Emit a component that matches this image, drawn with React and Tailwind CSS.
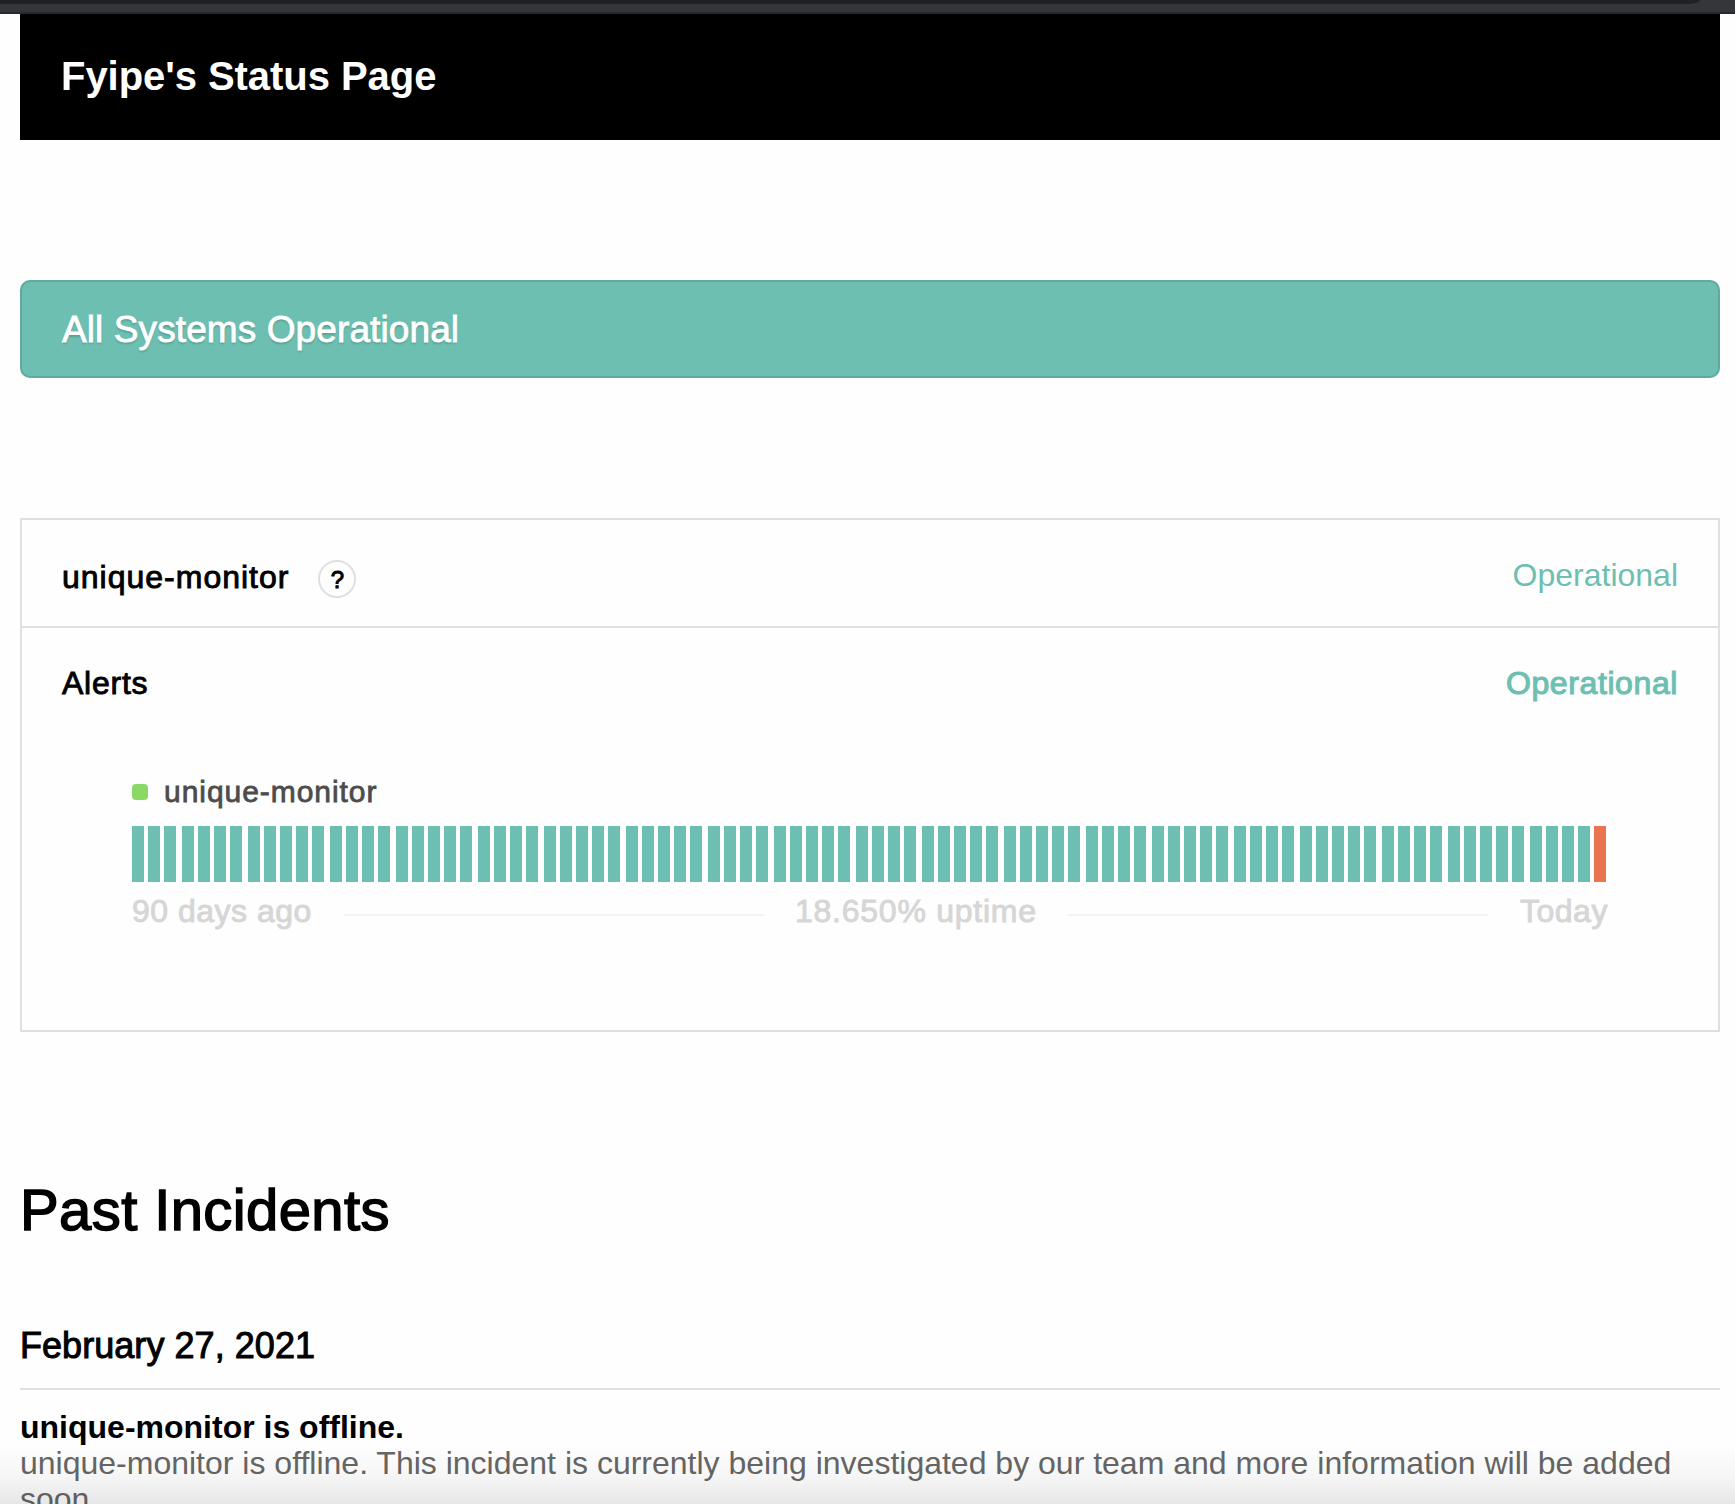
const DAYS = 90;
const PITCH = 16.4366;

// Left edge of each day's bar, snapped to whole two-pixel steps.
const edge = (i) => Math.round((i * PITCH + 0.1) / 2) * 2;
const bars = Array.from({ length: DAYS }, (_, i) => ({
  id: i,
  gap: i === 0 ? 0 : edge(i) - edge(i - 1) - 12,
  down: i === DAYS - 1,
}));

function BrowserEdge() {
  return (
    <div className="h-[14px] border-b-2 border-[#28292c] bg-[#35363a]">
      <div className="h-1 w-[1700px] rounded-br-[14px_4px] bg-[#202124]" />
    </div>
  );
}

function MonitorCard() {
  return (
    <section className="mt-[140px] h-[514px] border-2 border-[#e0e0e0]">
      <div className="flex h-[108px] items-start justify-between border-b-2 border-[#e0e0e0] px-10">
        <div className="flex items-start">
          <span className="mt-[39px] text-[32px] leading-9 tracking-[1px] [-webkit-text-stroke:0.9px]">unique-monitor</span>
          <span className="mt-10 ml-[29px] flex h-[38px] w-[38px] items-center justify-center rounded-full border-2 border-[#e0e0e0] pt-px text-2xl leading-none [-webkit-text-stroke:1px]">
            ?
          </span>
        </div>
        <span className="mt-[37px] text-[32px] leading-9 text-[#6dbfb1]">Operational</span>
      </div>
      <div className="flex justify-between px-10 pt-[37px] text-[32px] leading-9">
        <span className="tracking-[0.75px] [-webkit-text-stroke:0.9px]">Alerts</span>
        <span className="tracking-[0.6px] text-[#6dbfb1] [-webkit-text-stroke:1.1px]">Operational</span>
      </div>
      <div className="pr-[111px] pl-[110px]">
        <div className="mt-[73px] flex h-9 items-center">
          <span className="h-4 w-4 rounded bg-[#8ad967]" />
          <span className="ml-4 text-[30px] leading-9 tracking-[0.95px] text-[#4c4c4c] [-webkit-text-stroke:0.8px]">unique-monitor</span>
        </div>
        <div className="mt-4 flex h-14">
          {bars.map((bar) => (
            <span
              key={bar.id}
              className={bar.down ? "w-3 shrink-0 bg-[#e97550]" : "w-3 shrink-0 bg-[#6dbfb1]"}
              style={{ marginLeft: bar.gap }}
            />
          ))}
        </div>
        <div className="mt-[11px] flex items-center text-[32px] leading-9 tracking-[0.5px] whitespace-nowrap text-[#d6d6d6] [-webkit-text-stroke:0.9px]">
          <span className="w-[180px]">90 days ago</span>
          <span className="mt-2 mr-[30px] ml-8 h-0.5 flex-1 bg-[#f2f2f2]" />
          <span className="w-[242px] pl-px tracking-[0.75px]">18.650% uptime</span>
          <span className="mt-2 mr-8 ml-8 h-0.5 flex-1 bg-[#f2f2f2]" />
          <span className="w-[87px]">Today</span>
        </div>
      </div>
    </section>
  );
}

export default function App() {
  return (
    <div className="relative h-[1504px] overflow-hidden bg-[#fefefe] font-['Liberation_Sans',Arial,sans-serif] text-black">
      <BrowserEdge />
      <main className="mr-[15px] ml-5">
        <header className="h-[126px] bg-black pt-[42px] pl-[41px]">
          <h1 className="text-[40px] leading-10 font-bold tracking-[-0.05px] whitespace-nowrap text-white">Fyipe's Status Page</h1>
        </header>
        <div className="mt-[140px] h-[98px] rounded-[10px] border-2 border-[#5eaa9c] bg-[#6dbfb1] px-10 pt-[30px]">
          <span className="block text-[37px] leading-9 tracking-[0.1px] text-white [-webkit-text-stroke:0.8px] [text-shadow:0_2px_2px_rgba(0,0,0,0.18)]">
            All Systems Operational
          </span>
        </div>
        <MonitorCard />
        <h2 className="mt-[150px] text-[58px] leading-[56px] tracking-[0.4px] [-webkit-text-stroke:1.5px]">Past Incidents</h2>
        <h3 className="mt-[90px] text-[36px] leading-9 tracking-[0.05px] [-webkit-text-stroke:1px]">February 27, 2021</h3>
        <div className="mt-[24px] border-t-2 border-[#e0e0e0] pt-[19px] text-[32px] leading-9">
          <p className="font-bold">unique-monitor is offline.</p>
          <p className="text-[#666]">
            unique-monitor is offline. This incident is currently being investigated by our team and more information will be added
            soon.
          </p>
        </div>
      </main>
      <div className="pointer-events-none absolute inset-x-0 bottom-0 h-[60px] bg-linear-to-b from-black/0 via-black/3 to-black/9" />
    </div>
  );
}
